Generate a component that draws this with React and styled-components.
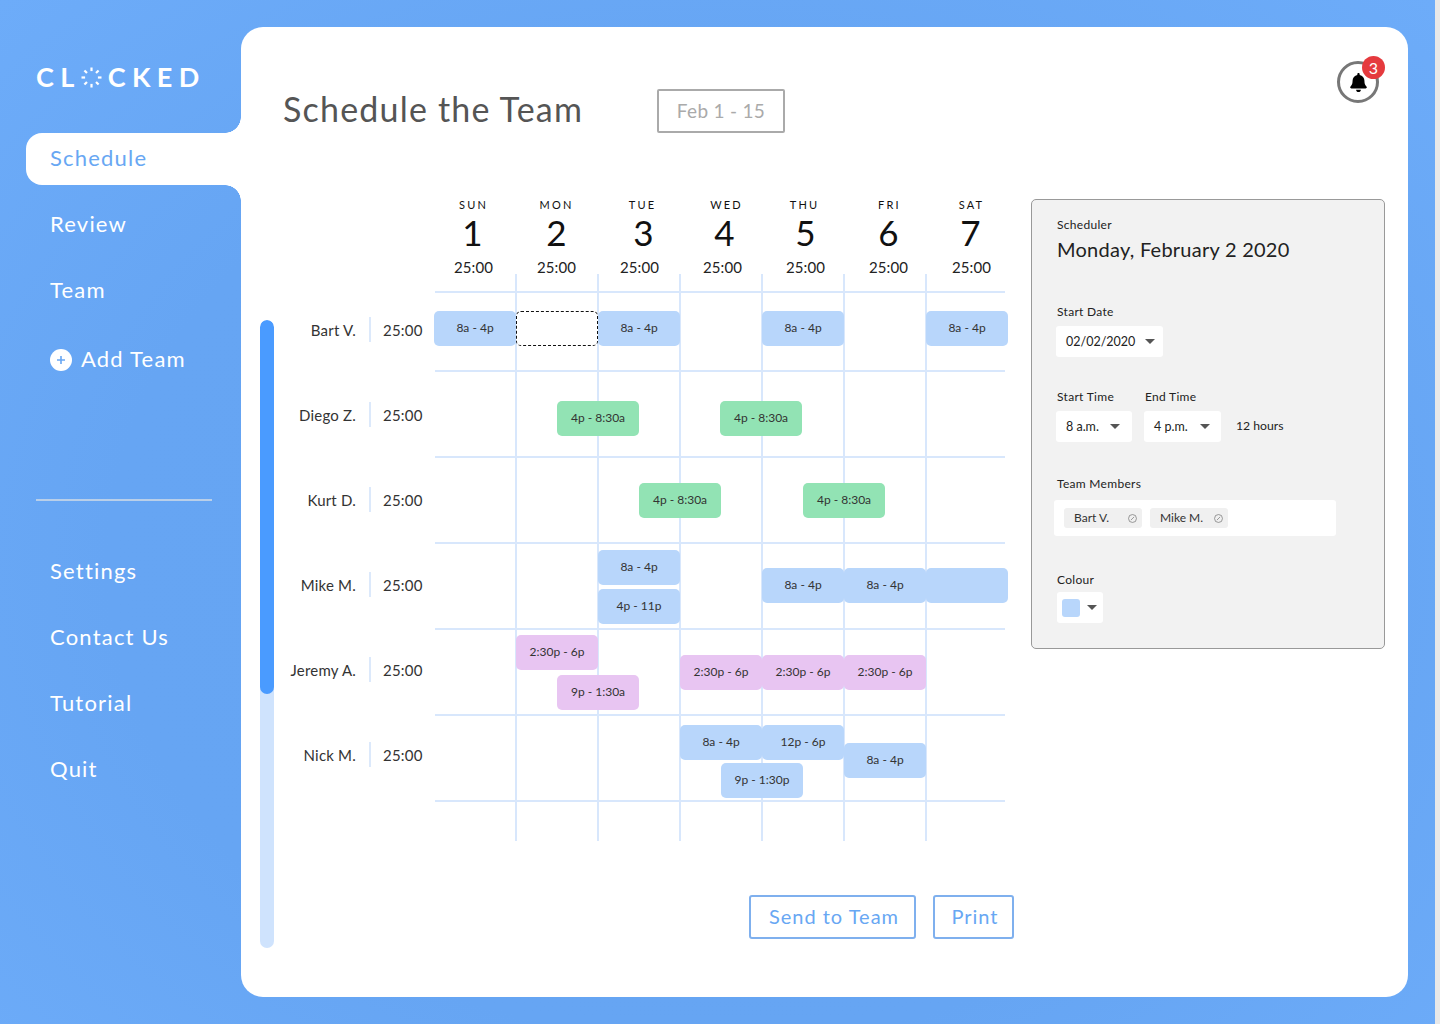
import React from "react";
import styled, { createGlobalStyle } from "styled-components";
import { FaBell } from "react-icons/fa";

const GlobalStyle = createGlobalStyle`
  html, body {
    margin: 0;
    padding: 0;
    background: #e8e8e8;
  }
  body {
    font-family: "Lato", "Liberation Sans", sans-serif;
  }
`;

const Page = styled.div`
  width: 1435px;
  height: 1024px;
  display: flex;
  align-items: flex-start;
  overflow: hidden;
  background: radial-gradient(ellipse at 50% 55%, #65a4f2 0%, #66a5f3 60%, #6dacf9 100%);
`;

const Sidebar = styled.aside`
  width: 241px;
  flex: none;
  padding-top: 27px;
  box-sizing: border-box;
`;

const Logo = styled.div`
  height: 106px;
  padding: 33px 0 0 36px;
  box-sizing: border-box;
  display: flex;
  align-items: flex-start;
  color: #fff;
  font-size: 27px;
  font-weight: 700;
  line-height: 34px;
  letter-spacing: 6.4px;
`;

const LogoMark = styled.svg`
  width: 21px;
  height: 21px;
  margin: 7px 6px 0 0;
  flex: none;
`;

const NavItem = styled.div`
  position: relative;
  height: 52px;
  margin: ${(p) => (p.$active ? "0 0 14px 26px" : "0 0 14px")};
  padding-left: ${(p) => (p.$active ? "24px" : "50px")};
  padding-bottom: 4px;
  box-sizing: border-box;
  display: flex;
  align-items: center;
  gap: 9px;
  font-size: 22px;
  letter-spacing: 1.2px;
  color: ${(p) => (p.$active ? "#68a7f3" : "#fff")};
  background: ${(p) => (p.$active ? "#fff" : "transparent")};
  border-radius: 16px 0 0 16px;

  ${(p) =>
    p.$active &&
    `
    &::before, &::after {
      content: "";
      position: absolute;
      right: 0;
      width: 16px;
      height: 16px;
    }
    &::before {
      top: -16px;
      background: radial-gradient(circle at 0 0, transparent 15.5px, #fff 16px);
    }
    &::after {
      bottom: -16px;
      background: radial-gradient(circle at 0 100%, transparent 15.5px, #fff 16px);
    }
  `}
`;

const AddItem = styled(NavItem)`
  margin-top: 17px;
`;

const PlusBadge = styled.span`
  width: 22px;
  height: 22px;
  margin-top: 4px;
  border-radius: 50%;
  background: #fff;
  display: flex;
  align-items: center;
  justify-content: center;
  flex: none;
`;

const NavRule = styled.div`
  width: 176px;
  height: 2px;
  margin: 113px 0 45px 36px;
  background: #b9cfe9;
`;

const Card = styled.main`
  width: 1167px;
  height: 970px;
  margin-top: 27px;
  flex: none;
  background: #fff;
  border-radius: 22px;
`;

const Header = styled.header`
  height: 172px;
  padding: 0 29px 0 42px;
  box-sizing: border-box;
  display: flex;
  align-items: flex-start;
`;

const Title = styled.h1`
  width: 374px;
  margin: 60px 0 0;
  font-size: 34px;
  font-weight: 400;
  line-height: 44px;
  color: #555;
  letter-spacing: 1.2px;
`;

const DateRange = styled.div`
  width: 128px;
  height: 44px;
  margin-top: 62px;
  padding-bottom: 2px;
  box-sizing: border-box;
  border: 2px solid #aaa;
  border-radius: 2px;
  display: flex;
  align-items: center;
  justify-content: center;
  font-size: 19px;
  color: #aaa;
  letter-spacing: 0.3px;
`;

const BellRing = styled.div`
  position: relative;
  width: 42px;
  height: 42px;
  margin: 34px 0 0 auto;
  box-sizing: border-box;
  border: 3px solid #777;
  border-radius: 50%;
  display: flex;
  align-items: center;
  justify-content: center;
  color: #000;
  font-size: 19px;
`;

const BellBadge = styled.span`
  position: absolute;
  top: -8px;
  right: -9px;
  width: 23px;
  height: 23px;
  border-radius: 50%;
  background: #e53a3e;
  color: #fff;
  font-size: 16px;
  display: flex;
  align-items: center;
  justify-content: center;
`;

const Body = styled.div`
  display: flex;
  align-items: flex-start;
  padding-left: 19px;
`;

const ScrollTrack = styled.div`
  width: 14px;
  height: 628px;
  margin-top: 121px;
  flex: none;
  border-radius: 7px;
  background: #cfe3fd;
  overflow: hidden;
`;

const ScrollThumb = styled.div`
  height: 374px;
  border-radius: 7px;
  background: #4a9bff;
`;

const Schedule = styled.section`
  width: 740px;
  flex: none;
`;

const DayHead = styled.div`
  height: 75px;
  padding-left: 158px;
  display: flex;
`;

const DayCol = styled.div`
  width: 83px;
  display: flex;
  flex-direction: column;
  align-items: center;
  color: #111;
`;

const DayName = styled.div`
  margin-left: ${(p) => p.$nudge * 2}px;
  font-size: 11px;
  line-height: 12px;
  letter-spacing: 2.2px;
`;

const DayNum = styled.div`
  margin: 1px 0 0 ${(p) => p.$nudge * 2}px;
  font-size: 35px;
  line-height: 40px;
  font-weight: 400;
`;

const DayHours = styled.div`
  font-size: 15px;
  line-height: 18px;
  margin-top: 6px;
  color: #222;
  letter-spacing: 0.1px;
`;

const Timetable = styled.div`
  display: flex;
  align-items: flex-start;
`;

const People = styled.div`
  width: 160px;
  padding-top: 13px;
  flex: none;
`;

const Person = styled.div`
  height: 85px;
  display: flex;
  align-items: center;
  font-size: 15px;
  color: #333;
`;

const PersonName = styled.div`
  width: 82px;
  padding-right: 13px;
  text-align: right;
  letter-spacing: 0.2px;
`;

const PersonDivider = styled.div`
  width: 2px;
  height: 25px;
  background: #dce9fb;
`;

const PersonHours = styled.div`
  margin-left: 12px;
  letter-spacing: 0.2px;
`;

const Board = styled.div`
  position: relative;
  width: 574px;
  height: 567px;
  padding-top: 17px;
  box-sizing: border-box;
`;

// the six day separators, drawn behind the rows
const Verticals = styled.div`
  position: absolute;
  top: 0;
  bottom: 0;
  left: 81px;
  width: 412px;
  background: linear-gradient(90deg, #d8e7fc 2px, transparent 2px);
  background-size: 82px 100%;
`;

const HLine = styled.div`
  position: relative;
  width: 570px;
  height: 2px;
  margin-left: 1px;
  background: #d8e7fc;
`;

const Row = styled.div`
  position: relative;
  height: ${(p) => p.$height}px;
  display: grid;
  grid-template-columns: repeat(14, 41px);
  grid-template-rows: 35px;
`;

const tones = {
  blue: "#b8d6fb",
  green: "#92e3b4",
  pink: "#e8c5f2",
};

const Shift = styled.div`
  grid-row: 1;
  grid-column: ${(p) => p.$col + 1} / span 2;
  height: 35px;
  margin: ${(p) => p.$top}px ${(p) => -(p.$dx || 0)}px 0 ${(p) => p.$dx || 0}px;
  padding-bottom: 2px;
  box-sizing: border-box;
  border-radius: 5px;
  border: ${(p) => (p.$empty ? "1px dashed #111" : "none")};
  background: ${(p) => (p.$empty ? "#fff" : tones[p.$tone])};
  display: flex;
  align-items: center;
  justify-content: center;
  font-size: 12px;
  color: #333;
`;

const Actions = styled.div`
  margin-top: 54px;
  display: flex;
  justify-content: flex-end;
  gap: 17px;
`;

const ActionButton = styled.button`
  height: 44px;
  width: ${(p) => p.$width}px;
  box-sizing: border-box;
  background: #fff;
  border: 2px solid #7fb0ee;
  border-radius: 3px;
  color: #68a7f3;
  font-family: inherit;
  font-size: 20px;
  letter-spacing: 1px;
  padding: 0 0 2px 3px;
`;

const Panel = styled.aside`
  width: 354px;
  height: 450px;
  margin-left: 17px;
  flex: none;
  box-sizing: border-box;
  padding: 17px 0 0 25px;
  background: #f2f2f2;
  border: 1px solid #999;
  border-radius: 5px;
  color: #222;
`;

const PanelLabel = styled.div`
  font-size: 12px;
  line-height: 16px;
  color: #222;
  letter-spacing: 0.3px;
  margin-top: ${(p) => p.$top || 0}px;
`;

const PanelTitle = styled.div`
  font-size: 20px;
  line-height: 26px;
  margin-top: 3px;
  color: #222;
  letter-spacing: 0.25px;
`;

const SelectBox = styled.div`
  width: ${(p) => p.$width}px;
  height: 31px;
  margin: 6px 0 0 -1px;
  padding: 0 ${(p) => p.$pr}px 0 10px;
  box-sizing: border-box;
  display: flex;
  align-items: center;
  justify-content: space-between;
  background: #fff;
  border-radius: 3px;
  font-size: 12.5px;
  color: #222;
`;

const Caret = styled.span`
  width: 0;
  height: 0;
  border-left: 5.5px solid transparent;
  border-right: 5.5px solid transparent;
  border-top: 5.5px solid #555;
`;

const TimeRow = styled.div`
  display: flex;
  align-items: flex-end;
  margin-top: 32px;
`;

const TimeField = styled.div`
  width: ${(p) => p.$width}px;
`;

const HoursNote = styled.div`
  height: 31px;
  margin-left: -1px;
  padding-bottom: 2px;
  box-sizing: border-box;
  display: flex;
  align-items: center;
  font-size: 12.2px;
  color: #222;
`;

const MemberBox = styled.div`
  width: 282px;
  height: 36px;
  margin: 8px 0 0 -3px;
  padding-left: 10px;
  box-sizing: border-box;
  display: flex;
  align-items: center;
  gap: 8px;
  background: #fff;
  border-radius: 3px;
`;

const Chip = styled.div`
  width: 78px;
  height: 20px;
  padding: 0 5px 2px 10px;
  box-sizing: border-box;
  display: flex;
  align-items: center;
  justify-content: space-between;
  background: #f0f0f0;
  border-radius: 3px;
  font-size: 12px;
  color: #333;
`;

const ChipClose = styled.svg`
  width: 9px;
  height: 9px;
  margin-top: 2px;
  flex: none;
`;

const ColourBox = styled(SelectBox)`
  padding: 0 6px 0 5px;
  margin: 4px 0 0;
`;

const Swatch = styled.span`
  width: 18px;
  height: 18px;
  border-radius: 3px;
  background: #b8d6fb;
`;

// the last two values pull the label and the number off the column centre
const days = [
  ["SUN", 1, 0, -1],
  ["MON", 2, 0, 0],
  ["TUE", 3, 3, 4],
  ["WED", 4, 4, 2],
  ["THU", 5, -1, 0],
  ["FRI", 6, 1, 0],
  ["SAT", 7, 0, -1],
];

const rows = [
  {
    name: "Bart V.",
    height: 77,
    shifts: [
      { col: 0, top: 18, tone: "blue", text: "8a - 4p" },
      { col: 2, top: 18, empty: true },
      { col: 4, top: 18, tone: "blue", text: "8a - 4p" },
      { col: 8, top: 18, tone: "blue", text: "8a - 4p" },
      { col: 12, top: 18, tone: "blue", text: "8a - 4p" },
    ],
  },
  {
    name: "Diego Z.",
    height: 84,
    shifts: [
      { col: 3, top: 29, tone: "green", text: "4p - 8:30a" },
      { col: 7, top: 29, dx: -1, tone: "green", text: "4p - 8:30a" },
    ],
  },
  {
    name: "Kurt D.",
    height: 84,
    shifts: [
      { col: 5, top: 25, tone: "green", text: "4p - 8:30a" },
      { col: 9, top: 25, tone: "green", text: "4p - 8:30a" },
    ],
  },
  {
    name: "Mike M.",
    height: 84,
    shifts: [
      { col: 4, top: 6, tone: "blue", text: "8a - 4p" },
      { col: 4, top: 45, tone: "blue", text: "4p - 11p" },
      { col: 8, top: 24, tone: "blue", text: "8a - 4p" },
      { col: 10, top: 24, tone: "blue", text: "8a - 4p" },
      { col: 12, top: 24, tone: "blue", text: "" },
    ],
  },
  {
    name: "Jeremy A.",
    height: 84,
    shifts: [
      { col: 2, top: 5, tone: "pink", text: "2:30p - 6p" },
      { col: 3, top: 45, tone: "pink", text: "9p - 1:30a" },
      { col: 6, top: 25, tone: "pink", text: "2:30p - 6p" },
      { col: 8, top: 25, tone: "pink", text: "2:30p - 6p" },
      { col: 10, top: 25, tone: "pink", text: "2:30p - 6p" },
    ],
  },
  {
    name: "Nick M.",
    height: 84,
    shifts: [
      { col: 6, top: 9, tone: "blue", text: "8a - 4p" },
      { col: 8, top: 9, tone: "blue", text: "12p - 6p" },
      { col: 7, top: 47, tone: "blue", text: "9p - 1:30p" },
      { col: 10, top: 27, tone: "blue", text: "8a - 4p" },
    ],
  },
];

// the dotted "O" of the wordmark
const ticks = [0, 45, 90, 135, 180, 225, 270, 315];

const CloseIcon = () => (
  <ChipClose viewBox="0 0 10 10" fill="none" stroke="#777" strokeWidth="0.8">
    <circle cx="5" cy="5" r="4.4" />
    <path d="M3.2 6.8 6.8 3.2" />
  </ChipClose>
);

const App = () => (
  <Page>
    <GlobalStyle />
    <Sidebar>
      <Logo>
        CL
        <LogoMark viewBox="0 0 21 21">
          {ticks.map((a) => (
            <rect key={a} x="9.4" y="0.5" width="2.2" height="3.6" fill="#fff" transform={`rotate(${a} 10.5 10.5)`} />
          ))}
        </LogoMark>
        CKED
      </Logo>
      <NavItem $active>Schedule</NavItem>
      <NavItem>Review</NavItem>
      <NavItem>Team</NavItem>
      <AddItem>
        <PlusBadge>
          <svg width="10" height="10" viewBox="0 0 10 10" stroke="#68a7f3" strokeWidth="1.6">
            <path d="M5 1v8M1 5h8" />
          </svg>
        </PlusBadge>
        Add Team
      </AddItem>
      <NavRule />
      <NavItem>Settings</NavItem>
      <NavItem>Contact Us</NavItem>
      <NavItem>Tutorial</NavItem>
      <NavItem>Quit</NavItem>
    </Sidebar>

    <Card>
      <Header>
        <Title>Schedule the Team</Title>
        <DateRange>Feb 1 - 15</DateRange>
        <BellRing>
          <FaBell />
          <BellBadge>3</BellBadge>
        </BellRing>
      </Header>

      <Body>
        <ScrollTrack>
          <ScrollThumb />
        </ScrollTrack>

        <Schedule>
          <DayHead>
            {days.map(([name, num, nameNudge, numNudge]) => (
              <DayCol key={name}>
                <DayName $nudge={nameNudge}>{name}</DayName>
                <DayNum $nudge={numNudge}>{num}</DayNum>
                <DayHours>25:00</DayHours>
              </DayCol>
            ))}
          </DayHead>

          <Timetable>
            <People>
              {rows.map((r) => (
                <Person key={r.name}>
                  <PersonName>{r.name}</PersonName>
                  <PersonDivider />
                  <PersonHours>25:00</PersonHours>
                </Person>
              ))}
            </People>

            <Board>
              <Verticals />
              {rows.map((r) => (
                <React.Fragment key={r.name}>
                  <HLine />
                  <Row $height={r.height}>
                    {r.shifts.map((s, i) => (
                      <Shift key={i} $col={s.col} $top={s.top} $dx={s.dx} $tone={s.tone} $empty={s.empty}>
                        {s.text}
                      </Shift>
                    ))}
                  </Row>
                </React.Fragment>
              ))}
              <HLine />
            </Board>
          </Timetable>

          <Actions>
            <ActionButton $width={167}>Send to Team</ActionButton>
            <ActionButton $width={81}>Print</ActionButton>
          </Actions>
        </Schedule>

        <Panel>
          <PanelLabel>Scheduler</PanelLabel>
          <PanelTitle>Monday, February 2 2020</PanelTitle>

          <PanelLabel $top={42}>Start Date</PanelLabel>
          <SelectBox $width={107} $pr={8}>
            02/02/2020
            <Caret />
          </SelectBox>

          <TimeRow>
            <TimeField $width={88}>
              <PanelLabel>Start Time</PanelLabel>
              <SelectBox $width={76} $pr={12}>
                8 a.m.
                <Caret />
              </SelectBox>
            </TimeField>
            <TimeField $width={92}>
              <PanelLabel>End Time</PanelLabel>
              <SelectBox $width={77} $pr={11}>
                4 p.m.
                <Caret />
              </SelectBox>
            </TimeField>
            <HoursNote>12 hours</HoursNote>
          </TimeRow>

          <PanelLabel $top={34}>Team Members</PanelLabel>
          <MemberBox>
            <Chip>
              Bart V.
              <CloseIcon />
            </Chip>
            <Chip>
              Mike M.
              <CloseIcon />
            </Chip>
          </MemberBox>

          <PanelLabel $top={36}>Colour</PanelLabel>
          <ColourBox $width={46}>
            <Swatch />
            <Caret />
          </ColourBox>
        </Panel>
      </Body>
    </Card>
  </Page>
);

export default App;
